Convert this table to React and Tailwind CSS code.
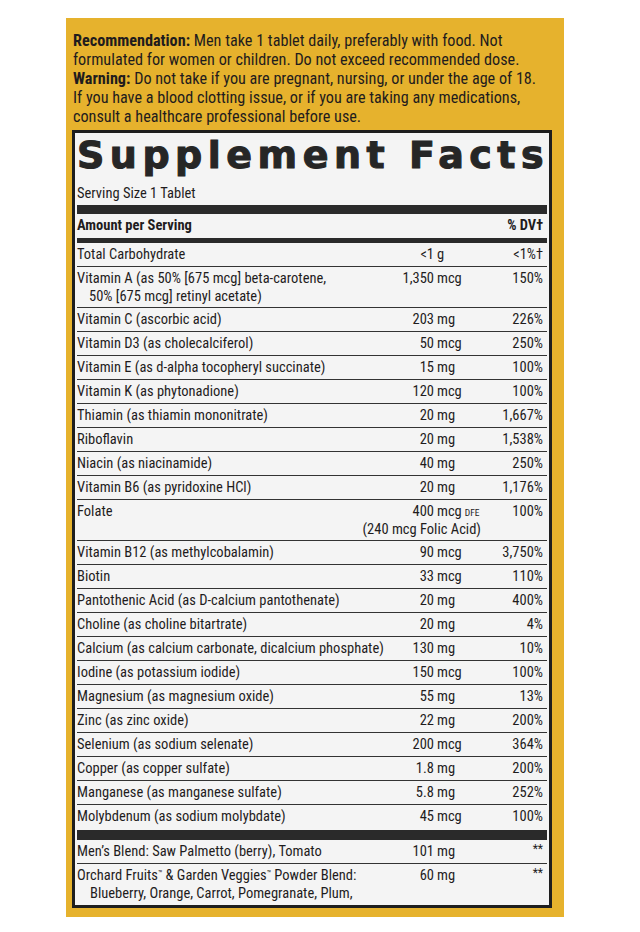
import React from "react";

const rows = [
  { name: "Total Carbohydrate", num: "<1", unit: "g", dv: "<1%†" },
  {
    name: "Vitamin A (as 50% [675 mcg] beta-carotene,",
    more: "50% [675 mcg] retinyl acetate)",
    num: "1,350",
    unit: "mcg",
    dv: "150%",
  },
  { name: "Vitamin C (ascorbic acid)", num: "203", unit: "mg", dv: "226%" },
  { name: "Vitamin D3 (as cholecalciferol)", num: "50", unit: "mcg", dv: "250%" },
  { name: "Vitamin E (as d-alpha tocopheryl succinate)", num: "15", unit: "mg", dv: "100%" },
  { name: "Vitamin K (as phytonadione)", num: "120", unit: "mcg", dv: "100%" },
  { name: "Thiamin (as thiamin mononitrate)", num: "20", unit: "mg", dv: "1,667%" },
  { name: "Riboflavin", num: "20", unit: "mg", dv: "1,538%" },
  { name: "Niacin (as niacinamide)", num: "40", unit: "mg", dv: "250%" },
  { name: "Vitamin B6 (as pyridoxine HCl)", num: "20", unit: "mg", dv: "1,176%" },
  { name: "Folate", num: "400", unit: "mcg", dfe: true, dv: "100%", note: "(240 mcg Folic Acid)" },
  { name: "Vitamin B12 (as methylcobalamin)", num: "90", unit: "mcg", dv: "3,750%" },
  { name: "Biotin", num: "33", unit: "mcg", dv: "110%" },
  { name: "Pantothenic Acid (as D-calcium pantothenate)", num: "20", unit: "mg", dv: "400%" },
  { name: "Choline (as choline bitartrate)", num: "20", unit: "mg", dv: "4%" },
  { name: "Calcium (as calcium carbonate, dicalcium phosphate)", num: "130", unit: "mg", dv: "10%" },
  { name: "Iodine (as potassium iodide)", num: "150", unit: "mcg", dv: "100%" },
  { name: "Magnesium (as magnesium oxide)", num: "55", unit: "mg", dv: "13%" },
  { name: "Zinc (as zinc oxide)", num: "22", unit: "mg", dv: "200%" },
  { name: "Selenium (as sodium selenate)", num: "200", unit: "mcg", dv: "364%" },
  { name: "Copper (as copper sulfate)", num: "1.8", unit: "mg", dv: "200%" },
  { name: "Manganese (as manganese sulfate)", num: "5.8", unit: "mg", dv: "252%" },
  { name: "Molybdenum (as sodium molybdate)", num: "45", unit: "mcg", dv: "100%" },
];

const blends = [
  { name: "Men’s Blend: Saw Palmetto (berry), Tomato", num: "101", unit: "mg" },
  {
    name: (
      <>
        Orchard Fruits<sup className="text-[8px]">™</sup> &amp; Garden Veggies
        <sup className="text-[8px]">™</sup> Powder Blend:
      </>
    ),
    more: "Blueberry, Orange, Carrot, Pomegranate, Plum,",
    num: "60",
    unit: "mg",
  },
];

const Amount = ({ num, unit, dfe }) => (
  <>
    <div className="w-[40px] flex justify-end whitespace-nowrap">{num}</div>
    <div className="w-[39px] pl-[3px] whitespace-nowrap">
      {unit}
      {dfe && <span className="ml-[3px] text-[9.5px] leading-none">DFE</span>}
    </div>
  </>
);

// two-line rows are 41px tall, single ones 24px (border included)
const Row = ({ row, last }) => (
  <div
    className={`pt-[3px] pr-[4px] ${row.more || row.note ? "h-[41px]" : "h-[24px]"} ${
      last ? "" : "border-b border-[#333]"
    }`}
  >
    <div className="flex">
      <div className="flex-1 whitespace-nowrap">{row.name}</div>
      <Amount num={row.num} unit={row.unit} dfe={row.dfe} />
      <div className="w-[70px] text-right">{row.dv}</div>
    </div>
    {row.more && <div className="pl-[12px] whitespace-nowrap">{row.more}</div>}
    {row.note && <div className="mr-[62px] text-right">{row.note}</div>}
  </div>
);

const BlendRow = ({ row, last }) => (
  <div
    className={`pt-[3px] pr-[4px] ${row.more ? "h-[41px]" : "h-[24px]"} ${
      last ? "" : "border-b border-[#333]"
    }`}
  >
    <div className="flex">
      <div className="flex-1 whitespace-nowrap">{row.name}</div>
      <Amount num={row.num} unit={row.unit} />
      <div className="w-[70px] text-right text-[12px] leading-[12px]">**</div>
    </div>
    {row.more && <div className="pl-[13px] whitespace-nowrap">{row.more}</div>}
  </div>
);

export default function App() {
  return (
    <div className="min-h-screen bg-white pt-[18px] font-['Roboto_Condensed','Liberation_Sans_Narrow',Roboto,sans-serif] font-stretch-condensed text-[#1f1c1d]">
      <div className="ml-[66px] w-[498px] h-[899px] bg-[#e6b22d] pl-[6px] pr-[12px] pt-[13px] pb-[9px] flex flex-col">
        <div className="pl-[1px] text-[16.2px] leading-[19px] whitespace-nowrap">
          <p>
            <b>Recommendation:</b> Men take 1 tablet daily, preferably with food. Not
          </p>
          <p>formulated for women or children. Do not exceed recommended dose.</p>
          <p>
            <b>Warning:</b> Do not take if you are pregnant, nursing, or under the age of 18.
          </p>
          <p>If you have a blood clotting issue, or if you are taking any medications,</p>
          <p>consult a healthcare professional before use.</p>
        </div>

        <div className="mt-[4px] flex-1 overflow-hidden border-[3px] border-[#1e1e1e] bg-[#f4f4f4] px-[2px] text-[14.5px] leading-[18px]">
          <h1 className="pt-[3px] font-['DejaVu_Sans',sans-serif] font-stretch-normal text-[38px] leading-none font-bold tracking-[5.5px] text-[#262626] whitespace-nowrap [-webkit-text-stroke:1.1px_#262626]">
            Supplement Facts
          </h1>
          <div className="mt-[11px] pb-[2px]">Serving Size 1 Tablet</div>
          <div className="h-[9px] bg-[#2a2a2a]" />
          <div className="flex h-[24px] pt-[3px] pr-[4px] font-bold">
            <div className="flex-1">Amount per Serving</div>
            <div>% DV†</div>
          </div>
          <div className="h-[5px] bg-[#2a2a2a]" />
          {rows.map((r, i) => (
            <Row key={i} row={r} last={i === rows.length - 1} />
          ))}
          <div className="mt-[1px] h-[10px] bg-[#2a2a2a]" />
          {blends.map((r, i) => (
            <BlendRow key={i} row={r} last={i === blends.length - 1} />
          ))}
        </div>
      </div>
    </div>
  );
}
